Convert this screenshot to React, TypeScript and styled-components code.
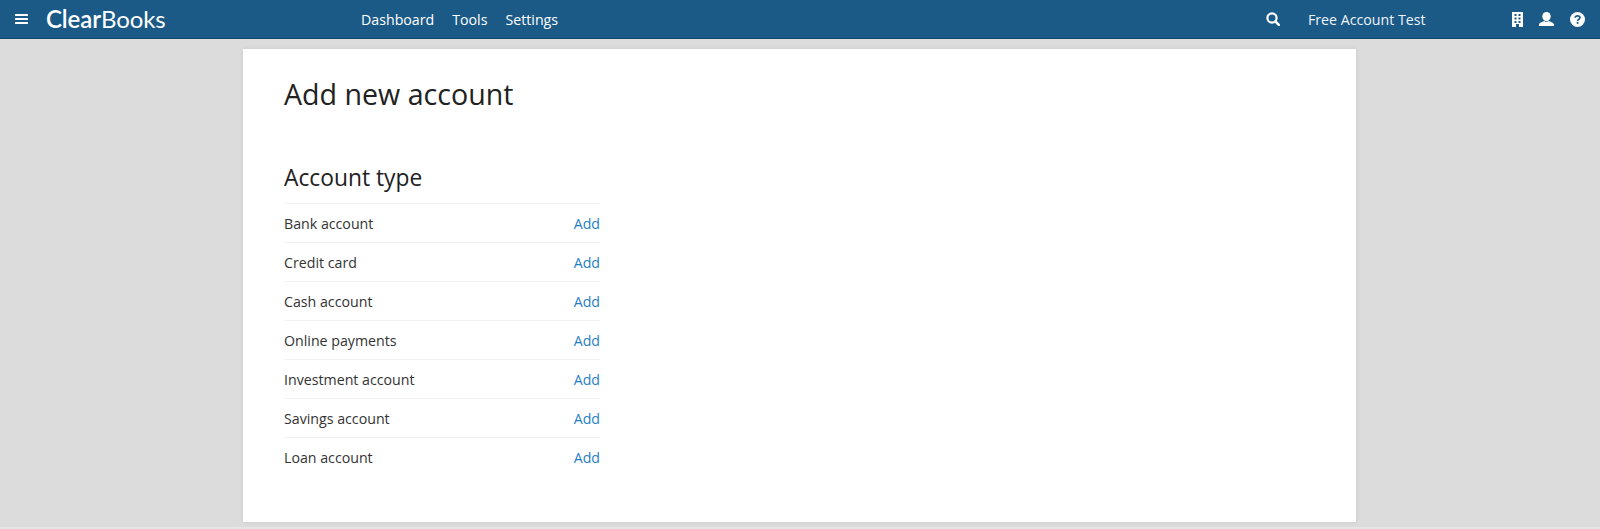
import React from 'react'
import styled, { createGlobalStyle } from 'styled-components'

const GlobalStyle = createGlobalStyle`
  html, body {
    margin: 0;
    height: 100%;
    background: #dcdcdc;
    font-family: "Open Sans", "Liberation Sans", sans-serif;
    overflow: hidden;
  }
`

const Page = styled.div`
  display: flex;
  flex-direction: column;
  height: 529px;
`

const TopBar = styled.header`
  display: flex;
  align-items: center;
  flex-shrink: 0;
  height: 38px;
  background: #1b5a87;
  border-bottom: 1px solid #134567;
  color: #fff;
`

const IconButton = styled.a<{ $left?: number }>`
  display: flex;
  align-items: center;
  justify-content: center;
  margin-left: ${props => props.$left || 0}px;
  color: #fff;
`

const Logo = styled.a`
  margin-left: 18px;
  width: 315px;
  font-family: "Lato", sans-serif;
  font-size: 24px;
  line-height: 38px;
  letter-spacing: -0.1px;
  color: #fff;

  b {
    font-weight: 600;
  }
`

const Nav = styled.nav`
  display: flex;
  gap: 18px;
  padding-top: 1px;
  font-size: 14.2px;
`

const NavLink = styled.a`
  color: #fff;
`

const Spacer = styled.div`
  flex: 1;
`

const AccountName = styled.span`
  width: 204px;
  margin-left: 28px;
  padding-top: 1px;
  font-size: 14.2px;
  color: #eef3f7;
`

const Panel = styled.main`
  box-sizing: border-box;
  width: 1113px;
  height: 473px;
  margin: 10px 0 0 243px;
  padding: 24px 41px;
  background: #fff;
  box-shadow: 0 0 5px rgba(0, 0, 0, 0.08);
`

const PageTitle = styled.h1`
  margin: 0 0 46px;
  font-size: 28.6px;
  line-height: 42px;
  font-weight: 400;
  color: #222;
`

const SectionTitle = styled.h2`
  margin: 0 0 9px;
  font-size: 22.8px;
  line-height: 33px;
  font-weight: 400;
  color: #222;
`

const AccountList = styled.ul`
  width: 316px;
  margin: 0;
  padding: 0;
  list-style: none;
`

const AccountRow = styled.li`
  display: flex;
  justify-content: space-between;
  align-items: center;
  height: 38px;
  border-top: 1px solid #f1f1f1;
  font-size: 14.2px;
  color: #333;
`

const AddLink = styled.a`
  color: #1f7fc4;
`

const FooterStrip = styled.div`
  height: 2px;
  margin-top: auto;
  background: #e6e6e6;
`

const accountTypes = [
  'Bank account',
  'Credit card',
  'Cash account',
  'Online payments',
  'Investment account',
  'Savings account',
  'Loan account',
]

const MenuIcon = () => (
  <svg width="13" height="12" viewBox="0 0 13 12" fill="currentColor">
    <rect y="1" width="13" height="2" rx="0.5" />
    <rect y="5" width="13" height="2" rx="0.5" />
    <rect y="9" width="13" height="2" rx="0.5" />
  </svg>
)

const SearchIcon = () => (
  <svg width="14" height="14" viewBox="0 0 14 14" fill="none" stroke="currentColor">
    <circle cx="6" cy="6" r="4.6" strokeWidth="2.2" />
    <path d="M9.4 9.4 12.8 12.8" strokeWidth="2.6" strokeLinecap="round" />
  </svg>
)

const BuildingIcon = () => (
  <svg width="11" height="15" viewBox="0 0 11 15" fill="currentColor">
    <path
      fillRule="evenodd"
      d="M0 0h11v15H7v-3H4v3H0zM2.5 2v2h2V2zm4 0v2h2V2zm-4 3.5v2h2v-2zm4 0v2h2v-2zm-4 3.5v2h2V9zm4 0v2h2V9z"
    />
  </svg>
)

const UserIcon = () => (
  <svg width="15" height="14" viewBox="0 0 15 14" fill="currentColor">
    <ellipse cx="7.5" cy="4.6" rx="4.2" ry="4.6" />
    <path d="M0 14v-1.2C0 10.6 3 10.2 5 9l2.5 1L10 9c2 1.2 5 1.6 5 3.8V14z" />
  </svg>
)

const HelpIcon = () => (
  <svg width="15" height="15" viewBox="0 0 15 15">
    <circle cx="7.5" cy="7.5" r="7.5" fill="currentColor" />
    <path
      d="M5.2 5.8C5.3 4.5 6.3 3.8 7.6 3.8c1.3 0 2.3.8 2.3 1.9 0 1.7-2.3 1.6-2.3 3.3"
      fill="none"
      stroke="#1b5a87"
      strokeWidth="1.7"
    />
    <rect x="6.7" y="10" width="1.8" height="1.8" fill="#1b5a87" />
  </svg>
)

export default function App() {
  return (
    <Page>
      <GlobalStyle />
      <TopBar>
        <IconButton $left={15}>
          <MenuIcon />
        </IconButton>
        <Logo>
          <b>Clear</b>Books
        </Logo>
        <Nav>
          <NavLink>Dashboard</NavLink>
          <NavLink>Tools</NavLink>
          <NavLink>Settings</NavLink>
        </Nav>
        <Spacer />
        <IconButton>
          <SearchIcon />
        </IconButton>
        <AccountName>Free Account Test</AccountName>
        <IconButton>
          <BuildingIcon />
        </IconButton>
        <IconButton $left={16}>
          <UserIcon />
        </IconButton>
        <IconButton $left={16}>
          <HelpIcon />
        </IconButton>
        <IconButton $left={15} />
      </TopBar>
      <Panel>
        <PageTitle>Add new account</PageTitle>
        <SectionTitle>Account type</SectionTitle>
        <AccountList>
          {accountTypes.map(name => (
            <AccountRow key={name}>
              {name}
              <AddLink>Add</AddLink>
            </AccountRow>
          ))}
        </AccountList>
      </Panel>
      <FooterStrip />
    </Page>
  )
}
